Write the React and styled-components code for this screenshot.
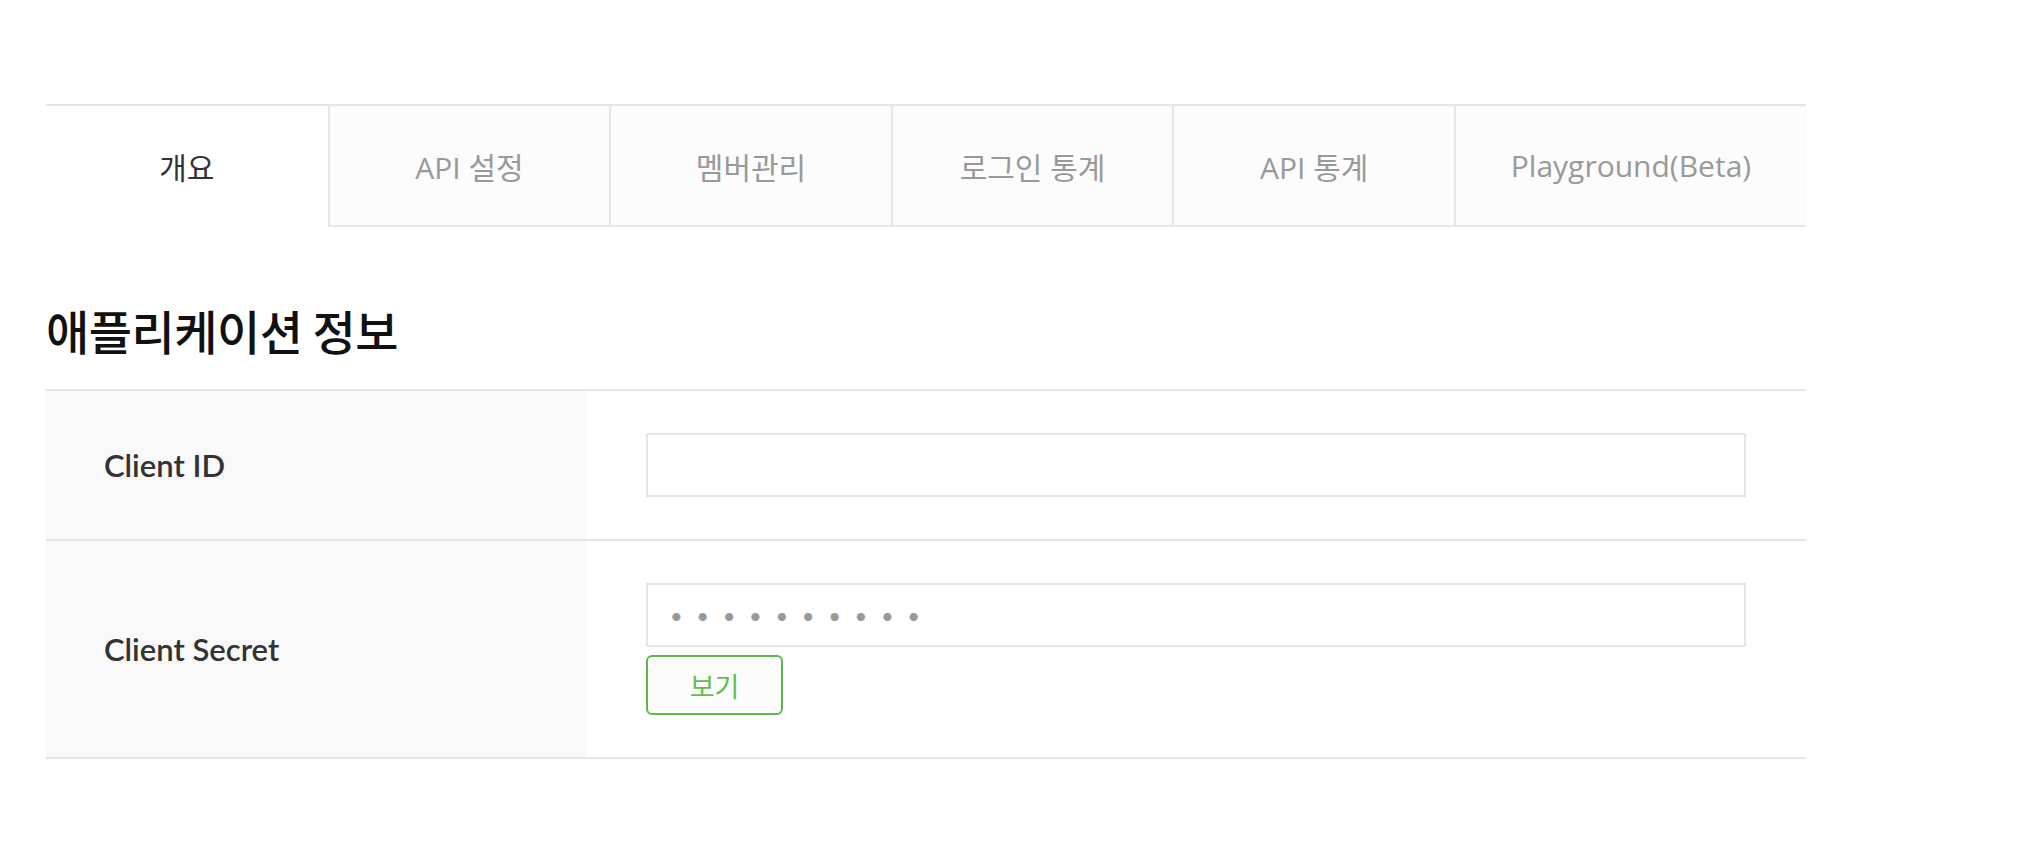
import React, { useState } from "react";
import styled, { createGlobalStyle } from "styled-components";

const GlobalStyle = createGlobalStyle`
  html, body {
    margin: 0;
    padding: 0;
    background: #fff;
  }
  body {
    font-family: Lato, "Noto Sans CJK KR", sans-serif;
    color: #333;
  }
  * {
    box-sizing: border-box;
  }
`;

const tabs = ["개요", "API 설정", "멤버관리", "로그인 통계", "API 통계", "Playground(Beta)"];

function App() {
  const [active, setActive] = useState(0);
  const [shown, setShown] = useState(false);

  return (
    <Wrapper>
      <GlobalStyle />
      <TabList>
        {tabs.map((label, index) => (
          <Tab
            key={label}
            $active={index === active}
            $first={index === 0}
            onClick={() => setActive(index)}
          >
            {label}
          </Tab>
        ))}
      </TabList>

      <Title>애플리케이션 정보</Title>

      <InfoTable>
        <Row>
          <Label>Client ID</Label>
          <Value>
            <Field type="text" readOnly value="" />
          </Value>
        </Row>
        <Row>
          <Label>Client Secret</Label>
          <Value>
            <Field
              type={shown ? "text" : "password"}
              readOnly
              value="a1b2c3d4e5"
              $secret
            />
            <ShowButton type="button" onClick={() => setShown(!shown)}>
              보기
            </ShowButton>
          </Value>
        </Row>
      </InfoTable>
    </Wrapper>
  );
}

export default App;

const Wrapper = styled.div`
  width: 1806px;
  padding: 104px 0 80px 46px;
`;

const TabList = styled.ul`
  display: grid;
  grid-template-columns: repeat(5, 16%) 1fr;
  margin: 0;
  padding: 0;
  list-style: none;
  border-top: 2px solid #e6e6e6;
`;

const Tab = styled.li`
  display: flex;
  align-items: center;
  justify-content: center;
  height: 121px;
  font-family: "Open Sans", "Noto Sans CJK KR", sans-serif;
  font-size: 30px;
  letter-spacing: 0;
  cursor: pointer;
  color: ${(p) => (p.$active ? "#333" : "#999")};
  background: ${(p) => (p.$active ? "#fff" : "#fcfcfc")};
  border-left: ${(p) => (p.$first ? "none" : "2px solid #e6e6e6")};
  border-bottom: 2px solid ${(p) => (p.$active ? "transparent" : "#e6e6e6")};
`;

const Title = styled.h2`
  margin: 75px 0 31px;
  font-family: "Noto Sans CJK KR", sans-serif;
  font-size: 47px;
  line-height: 56px;
  font-weight: 500;
  letter-spacing: -0.5px;
  color: #111;
`;

const InfoTable = styled.div`
  border-top: 2px solid #e6e6e6;
`;

const Row = styled.div`
  display: grid;
  grid-template-columns: 540px 1fr;
  border-bottom: 2px solid #e6e6e6;
`;

const Label = styled.div`
  display: flex;
  align-items: center;
  padding-left: 58px;
  background: #f9f9f9;
  font-size: 31px;
  font-weight: 600;
  color: #333;
`;

const Value = styled.div`
  display: flex;
  flex-direction: column;
  align-items: flex-start;
  gap: 8px;
  padding: 42px 60px;
`;

const Field = styled.input`
  width: 100%;
  height: 64px;
  padding: 0 22px;
  border: 2px solid #e6e6e6;
  border-radius: 0;
  outline: none;
  background: #fff;
  font-family: Lato, sans-serif;
  font-size: ${(p) => (p.$secret ? "22px" : "26px")};
  letter-spacing: ${(p) => (p.$secret ? "13.6px" : "0")};
  color: #999;
`;

const ShowButton = styled.button`
  width: 137px;
  height: 60px;
  padding: 0;
  border: 2px solid #5aba47;
  border-radius: 6px;
  background: #fcfcfc;
  font-family: "Noto Sans CJK KR", sans-serif;
  font-size: 27px;
  color: #5cbf4a;
  cursor: pointer;
`;
